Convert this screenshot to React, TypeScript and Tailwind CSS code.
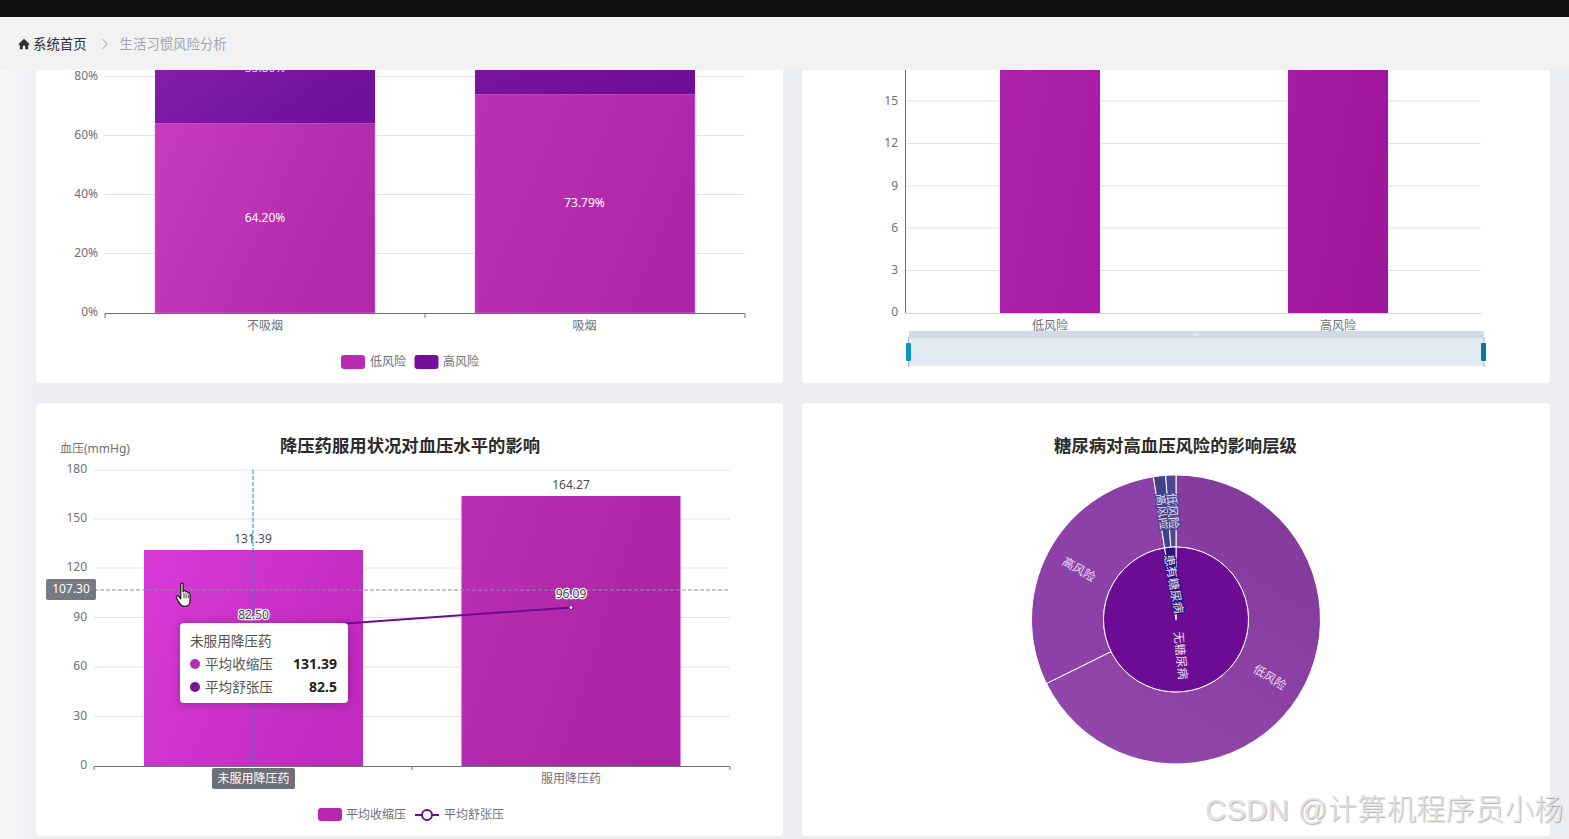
import React from "react";
import { ChevronRight } from "lucide-react";

const AXIS = "#6e7079";
const GRID = "#e2e3e9";

function Lbl({ x, y, t, fill = "#6e7079", size = 12, anchor = "middle", weight, rot, halo }: { x: number; y: number; t: string; fill?: string; size?: number; anchor?: "middle" | "end" | "start"; weight?: number; rot?: number; halo?: string }) {
  return (
    <text
      x={x}
      y={y}
      fill={fill}
      fontSize={size}
      fontWeight={weight}
      textAnchor={anchor}
      dominantBaseline="central"
      transform={rot !== undefined ? `rotate(${rot} ${x} ${y})` : undefined}
      stroke={halo}
      strokeWidth={halo ? 2.5 : undefined}
      paintOrder={halo ? "stroke" : undefined}
    >
      {t}
    </text>
  );
}

function Grad({ id, a, b }: { id: string; a: string; b: string }) {
  return (
    <linearGradient id={id} x1="0" y1="0" x2="1" y2="0.4">
      <stop offset="0" stopColor={a} />
      <stop offset="1" stopColor={b} />
    </linearGradient>
  );
}

function SmokeChart() {
  const ticks: [string, number][] = [["80%", 76.5], ["60%", 135.5], ["40%", 194.5], ["20%", 253.5]];
  return (
    <svg viewBox="36 70 747 313" className="w-full h-full block">
      <defs>
        <Grad id="lowA" a="#c83cbd" b="#b02aa9" />
        <Grad id="lowB" a="#bb31b5" b="#ae27a9" />
        <Grad id="hiA" a="#841fa9" b="#72109a" />
        <Grad id="hiB" a="#7a16a2" b="#6f0e98" />
      </defs>
      {ticks.map(([t, y]) => (
        <g key={t}>
          <line x1={105} x2={745} y1={y} y2={y} stroke={GRID} />
          <Lbl x={98} y={y - 1} t={t} anchor="end" />
        </g>
      ))}
      <Lbl x={98} y={311.5} t="0%" anchor="end" />
      <rect x={155} y={123} width={220} height={190} fill="url(#lowA)" stroke="#dc7cdc" strokeOpacity={0.6} />
      <rect x={155} y={60} width={220} height={63} fill="url(#hiA)" />
      <rect x={475} y={94} width={220} height={219} fill="url(#lowB)" stroke="#dc7cdc" strokeOpacity={0.6} />
      <rect x={475} y={60} width={220} height={34} fill="url(#hiB)" />
      <Lbl x={265} y={217} t="64.20%" fill="#fff" />
      <Lbl x={584.5} y={202} t="73.79%" fill="#fff" />
      <Lbl x={265} y={67} t="35.80%" fill="#e9d5f2" />
      <path d="M105 318V313.5H745V318M425 313.5V318" fill="none" stroke={AXIS} />
      <Lbl x={265} y={325} t="不吸烟" />
      <Lbl x={584.5} y={325} t="吸烟" />
      <rect x={341} y={355} width={24} height={14} rx={3} fill="#b92bb1" />
      <Lbl x={370} y={361} t="低风险" anchor="start" />
      <rect x={414.5} y={355} width={24} height={14} rx={3} fill="#730f9b" />
      <Lbl x={443} y={361} t="高风险" anchor="start" />
    </svg>
  );
}

function CountChart() {
  const ticks: [string, number][] = [["15", 101], ["12", 143.5], ["9", 186], ["6", 228], ["3", 270.5]];
  return (
    <svg viewBox="802 70 748 313" className="w-full h-full block">
      <defs>
        <Grad id="cA" a="#b022aa" b="#a81ca5" />
        <Grad id="cB" a="#a81ba3" b="#a0169d" />
      </defs>
      {ticks.map(([t, y]) => (
        <g key={t}>
          <line x1={906} x2={1481} y1={y} y2={y} stroke={GRID} />
          <Lbl x={898} y={y - 1} t={t} anchor="end" />
        </g>
      ))}
      <Lbl x={898} y={311.5} t="0" anchor="end" />
      <line x1={906} x2={1481} y1={313.5} y2={313.5} stroke="#d6d7dd" />
      <line x1={905.5} x2={905.5} y1={70} y2={313} stroke={AXIS} />
      <rect x={1000} y={60} width={100} height={253} fill="url(#cA)" />
      <rect x={1288} y={60} width={100} height={253} fill="url(#cB)" />
      <Lbl x={1050} y={325} t="低风险" />
      <Lbl x={1338} y={325} t="高风险" />
      <rect x={909} y={338} width={575} height={28} fill="#e2eaf3" />
      <rect x={909} y={331} width={575} height={7} rx={1} fill="#d2dae8" />
      <path d="M1194 333v3M1196 333v3M1198 333v3" stroke="#fff" strokeWidth={0.7} />
      <line x1={908.5} x2={908.5} y1={337} y2={367} stroke="#a9b5c4" />
      <line x1={1484} x2={1484} y1={337} y2={367} stroke="#a9b5c4" />
      <rect x={906} y={343} width={5} height={18} rx={1} fill="#0b92c4" />
      <rect x={1481} y={343} width={5} height={18} rx={1} fill="#07789f" />
    </svg>
  );
}

function BpChart() {
  const ticks: [string, number][] = [["180", 470], ["150", 519], ["120", 568], ["90", 617.5], ["60", 667], ["30", 716.5]];
  return (
    <svg viewBox="36 403 747 433" className="w-full h-full block">
      <defs>
        <Grad id="bpA" a="#d93bd8" b="#c22bc0" />
        <Grad id="bpB" a="#ba2eb3" b="#ab25a6" />
      </defs>
      <Lbl x={410} y={445} t="降压药服用状况对血压水平的影响" fill="#2b2b2b" size={17.35} weight={700} />
      <Lbl x={60} y={448} t="血压(mmHg)" anchor="start" />
      {ticks.map(([t, y]) => (
        <g key={t}>
          <line x1={94} x2={730} y1={y} y2={y} stroke={GRID} />
          <Lbl x={87} y={y - 1.5} t={t} anchor="end" />
        </g>
      ))}
      <Lbl x={87} y={764} t="0" anchor="end" />
      <rect x={144} y={550} width={219} height={216} fill="url(#bpA)" />
      <rect x={461.5} y={496} width={219} height={270} fill="url(#bpB)" />
      <Lbl x={253} y={538} t="131.39" fill="#4b4b55" />
      <Lbl x={571} y={484} t="164.27" fill="#4b4b55" />
      <line x1={94} x2={730} y1={590} y2={590} stroke="#8a8d96" strokeDasharray="4 2" />
      <line x1={253} x2={253} y1={470} y2={766} stroke="#1090b4" strokeDasharray="4 2" />
      <polyline points="253,630 571,607.5" fill="none" stroke="#6a0d91" strokeWidth={2} />
      <circle cx={571} cy={607.5} r={2} fill="#fff" stroke="#6a0d91" />
      <Lbl x={253.5} y={614} t="82.50" fill="#444" halo="#fff" />
      <Lbl x={571} y={593} t="96.09" fill="#444" halo="#fff" />
      <path d="M94 770V766.5H730V770M412 766.5V770" fill="none" stroke={AXIS} />
      <rect x={46} y={579} width={50} height={21} rx={2} fill="#777a82" />
      <Lbl x={71} y={588.5} t="107.30" fill="#fff" />
      <rect x={212} y={768} width={83} height={21} rx={2} fill="#6e7079" />
      <Lbl x={253.5} y={778} t="未服用降压药" fill="#fff" />
      <Lbl x={571} y={778} t="服用降压药" />
      <rect x={318} y={808} width={24} height={13} rx={3} fill="#b527ae" />
      <Lbl x={346} y={814} t="平均收缩压" anchor="start" />
      <line x1={415} x2={439} y1={815} y2={815} stroke="#6a0d91" strokeWidth={2} />
      <circle cx={427} cy={815} r={5} fill="#fff" stroke="#6a0d91" strokeWidth={2} />
      <Lbl x={444} y={814} t="平均舒张压" anchor="start" />
    </svg>
  );
}

function polar(r: number, deg: number): [number, number] {
  const a = (deg * Math.PI) / 180;
  return [1176 + r * Math.sin(a), 619.5 - r * Math.cos(a)];
}

function sector(r0: number, r1: number, a0: number, a1: number) {
  const large = a1 - a0 > 180 ? 1 : 0;
  const [x0, y0] = polar(r1, a0);
  const [x1, y1] = polar(r1, a1);
  const [x2, y2] = polar(r0, a1);
  const [x3, y3] = polar(r0, a0);
  return `M${x0} ${y0}A${r1} ${r1} 0 ${large} 1 ${x1} ${y1}L${x2} ${y2}${r0 > 0 ? `A${r0} ${r0} 0 ${large} 0 ${x3} ${y3}` : ""}Z`;
}

function Sunburst() {
  return (
    <svg viewBox="802 403 748 433" className="w-full h-full block">
      <defs>
        <linearGradient id="sOuter" x1="0.8" y1="0" x2="0.2" y2="1">
          <stop offset="0" stopColor="#833a9b" />
          <stop offset="1" stopColor="#9347ab" />
        </linearGradient>
      </defs>
      <Lbl x={1175.5} y={445} t="糖尿病对高血压风险的影响层级" fill="#2b2b2b" size={17.35} weight={700} />
      <path d={sector(72.5, 144.5, 0, 243.7)} fill="url(#sOuter)" stroke="#fff" />
      <path d={sector(72.5, 144.5, 243.7, 351)} fill="#8c41a8" stroke="#fff" />
      <path d={sector(72.5, 144.5, 351, 355.9)} fill="#45408a" stroke="#fff" />
      <path d={sector(72.5, 144.5, 355.9, 360)} fill="#4d4690" stroke="#fff" />
      <path d={sector(0, 72.5, 0, 351)} fill="#6c0b93" stroke="#fff" />
      <path d={sector(0, 72.5, 351, 360)} fill="#2a1280" stroke="#fff" />
      <Lbl x={1079} y={569} t="高风险" fill="#ecdcf2" rot={30} />
      <Lbl x={1270} y={677} t="低风险" fill="#ecdcf2" rot={32} />
      <Lbl x={1181} y={655.5} t="无糖尿病" fill="#ecdcf2" rot={84} />
      <Lbl x={1174} y={584} t="患有糖尿病" fill="#e6e4f0" rot={80} halo="#2a1280" />
      <Lbl x={1163} y={511.5} t="高风险" fill="#e6e4f0" rot={83} halo="#45408a" />
      <Lbl x={1173} y={511} t="低风险" fill="#e6e4f0" rot={86} halo="#4d4690" />
    </svg>
  );
}

function Tip() {
  return (
    <div className="absolute left-[144px] top-[220px] w-[168px] h-[80px] rounded bg-white shadow-[0_0_10px_rgba(0,0,0,0.25)] pl-[10px] pr-[11px] pt-[6px] text-[13.6px] leading-[23px] text-[#555]">
      <div>未服用降压药</div>
      <div className="flex items-center">
        <span className="w-[10px] h-[10px] rounded-full bg-[#b92fb0] mr-[5px]" />
        <span>平均收缩压</span>
        <span className="ml-auto font-bold text-[14px] text-[#222]">131.39</span>
      </div>
      <div className="flex items-center">
        <span className="w-[10px] h-[10px] rounded-full bg-[#761399] mr-[5px]" />
        <span>平均舒张压</span>
        <span className="ml-auto font-bold text-[14px] text-[#222]">82.5</span>
      </div>
    </div>
  );
}

function HandCursor() {
  return (
    <svg viewBox="0 0 16 24" className="absolute left-[139px] top-[179px] w-[18px] h-[26px]">
      <path
        d="M5 2.2c0-1.5 2.2-1.5 2.2 0V9l.3-.6c.5-1 2 -.8 2 .4l.1.4c.5-.8 1.9-.6 2 .5l.1.5c.6-.6 1.9-.3 1.9.8V17c0 3.2-2 5.5-5 5.5-2.5 0-3.7-1-4.8-3L1 14.5c-.6-1.3 1-2.3 2-1.2L5 15.5Z"
        fill="#fff"
        stroke="#222"
        strokeWidth={1.2}
        strokeLinejoin="round"
      />
      <path d="M8 10v5M10 10.5v4.5M12 11.5v3.5" stroke="#222" strokeWidth={0.8} />
    </svg>
  );
}

export default function App() {
  return (
    <div className="relative w-full h-[839px] overflow-hidden flex flex-col bg-[#eceef2] font-['Noto_Sans','Noto_Sans_CJK_SC',sans-serif]">
      <div className="h-[17px] shrink-0 bg-[#0f0f0f]" />
      <nav className="h-[53px] shrink-0 bg-[#f2f2f3] flex items-center pl-[18px] pt-[1px] text-[13.4px]">
        <svg viewBox="0 0 12 12" className="w-[12px] h-[12px] mr-[3px]">
          <path d="M6 .8 .4 6.2l.8.8.6-.5V11.2h3V7.8h2.400v3.400h3V6.500l.6.5.8-.8Z" fill="#303133" />
        </svg>
        <span className="text-[#303133]">系统首页</span>
        <ChevronRight className="w-[18px] h-[18px] ml-[9px] mr-[6px] text-[#9a9da3]" strokeWidth={1.3} />
        <span className="text-[#a3a5a9]">生活习惯风险分析</span>
      </nav>
      <main className="flex-1 min-h-0 pl-[36px] pr-[19px] grid grid-cols-[747px_748px] grid-rows-[313px_433px] gap-x-[19px] gap-y-[20px] bg-gradient-to-r from-[#f7f7f8] from-0% to-[#eceef2] to-[2.5%]">
        <section className="bg-white rounded-b overflow-hidden"><SmokeChart /></section>
        <section className="bg-white rounded-b overflow-hidden"><CountChart /></section>
        <section className="relative bg-white rounded overflow-hidden">
          <BpChart />
          <HandCursor />
          <Tip />
        </section>
        <section className="bg-white rounded overflow-hidden"><Sunburst /></section>
      </main>
      <div className="absolute left-[1205px] top-[791px] text-[29px] tracking-[0.5px] leading-[38px] whitespace-nowrap text-[#e2e2e4] [text-shadow:1px_1px_1px_rgba(100,100,100,0.5)] font-['Liberation_Sans','Noto_Sans_CJK_SC',sans-serif] font-light">
        CSDN @计算机程序员小杨
      </div>
    </div>
  );
}
